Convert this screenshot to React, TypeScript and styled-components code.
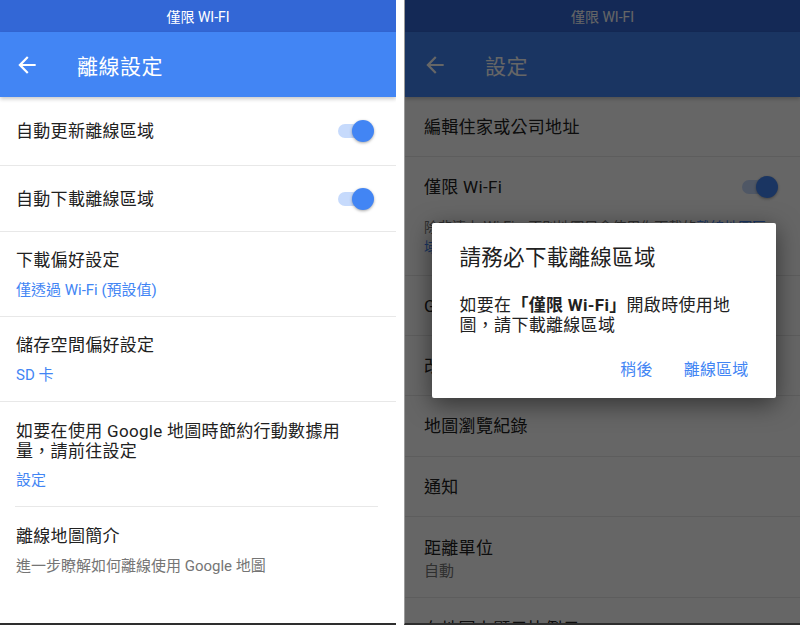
import styled, { createGlobalStyle } from "styled-components"

const GlobalStyle = createGlobalStyle`
  html, body {
    margin: 0;
    padding: 0;
    background: #ffffff;
  }
  body {
    font-family: Roboto, "Noto Sans CJK TC", sans-serif;
    color: #212121;
  }
`

const BackIcon = () => (
    <svg width="26" height="26" viewBox="0 0 24 24">
        <path fill="currentColor" d="M20 11H7.83l5.59-5.59L12 4l-8 8 8 8 1.41-1.41L7.83 13H20v-2z" />
    </svg>
)

const Toggle = () => (
    <Switch>
        <Track />
        <Thumb />
    </Switch>
)

const App = () => {
    return (
        <Page>
            <GlobalStyle />
            <Screen $edge={16}>
                <StatusBar>僅限 WI-FI</StatusBar>
                <Toolbar>
                    <BackButton><BackIcon /></BackButton>
                    <Title>離線設定</Title>
                </Toolbar>
                <SwitchRow $h={69} $line>
                    <Primary>自動更新離線區域</Primary>
                    <Toggle />
                </SwitchRow>
                <SwitchRow $h={66} $line>
                    <Primary>自動下載離線區域</Primary>
                    <Toggle />
                </SwitchRow>
                <TextRow $top={17} $gap={9} $line>
                    <Primary>下載偏好設定</Primary>
                    <Secondary $link>僅透過 Wi-Fi (預設值)</Secondary>
                </TextRow>
                <TextRow $top={17} $gap={9} $line>
                    <Primary>儲存空間偏好設定</Primary>
                    <Secondary $link>SD 卡</Secondary>
                </TextRow>
                <TextRow $top={19} $gap={9}>
                    <Primary $wrap>如要在使用 Google 地圖時節約行動數據用量，請前往設定</Primary>
                    <Secondary $link>設定</Secondary>
                </TextRow>
                <InsetDivider />
                <TextRow $top={18} $gap={9}>
                    <Primary>離線地圖簡介</Primary>
                    <Secondary>進一步瞭解如何離線使用 Google 地圖</Secondary>
                </TextRow>
            </Screen>

            <Screen $edge={19} $framed>
                <StatusBar>僅限 WI-FI</StatusBar>
                <Toolbar>
                    <BackButton><BackIcon /></BackButton>
                    <Title>設定</Title>
                </Toolbar>
                <SwitchRow $h={60} $line>
                    <Primary>編輯住家或公司地址</Primary>
                </SwitchRow>
                <SwitchRow $h={60}>
                    <Primary>僅限 Wi-Fi</Primary>
                    <Toggle />
                </SwitchRow>
                <Description>
                    除非連上 Wi-Fi，否則地圖只會使用你下載的<LinkText>離線地圖區域</LinkText>，範圍外的地圖將無法載入
                </Description>
                <SwitchRow $h={60} $line>
                    <Primary>Google 位置設定</Primary>
                </SwitchRow>
                <SwitchRow $h={60} $line>
                    <Primary>改善 Google 地圖</Primary>
                </SwitchRow>
                <SwitchRow $h={61} $line>
                    <Primary>地圖瀏覽紀錄</Primary>
                </SwitchRow>
                <SwitchRow $h={60} $line>
                    <Primary>通知</Primary>
                </SwitchRow>
                <TextRow $top={20} $gap={2} $line>
                    <Primary>距離單位</Primary>
                    <Secondary>自動</Secondary>
                </TextRow>
                <TextRow $top={20} $gap={2}>
                    <Primary>在地圖上顯示比例尺</Primary>
                </TextRow>

                <Scrim>
                    <Dialog>
                        <DialogTitle>請務必下載離線區域</DialogTitle>
                        <DialogBody>
                            如要在<b>「僅限 Wi-Fi」</b>開啟時使用地圖，請下載離線區域
                        </DialogBody>
                        <Actions>
                            <ActionButton>稍後</ActionButton>
                            <ActionButton>離線區域</ActionButton>
                        </Actions>
                    </Dialog>
                </Scrim>
            </Screen>
        </Page>
    )
}
export default App

const Page = styled.div`
    display: flex;
    gap: 8px;
    width: 800px;
    height: 625px;
    background: #ffffff;
`
const Screen = styled.div<{ $edge: number; $framed?: boolean }>`
    --edge: ${(p) => p.$edge}px;
    position: relative;
    width: 396px;
    height: 625px;
    box-sizing: border-box;
    overflow: hidden;
    background: #ffffff;
    border-bottom: 2px solid #2e2e2e;
    border-left: ${(p) => (p.$framed ? "1px solid #9a9a9a" : "none")};
`
const StatusBar = styled.div`
    height: 32px;
    display: flex;
    align-items: center;
    justify-content: center;
    background: #3367d6;
    color: #ffffff;
    font-size: 14px;
`
const Toolbar = styled.div`
    position: relative;
    z-index: 1;
    height: 65px;
    display: flex;
    align-items: center;
    background: #4285f4;
    color: #ffffff;
    box-shadow: 0 2px 4px rgba(0, 0, 0, 0.22);
`
const BackButton = styled.div`
    display: flex;
    width: 26px;
    height: 26px;
    margin-left: calc(var(--edge) - 2px);
`
const Title = styled.h1`
    margin: 0 0 0 37px;
    font-size: 21px;
    font-weight: 400;
    letter-spacing: 0.5px;
`
const SwitchRow = styled.div<{ $h: number; $line?: boolean }>`
    height: ${(p) => p.$h}px;
    box-sizing: border-box;
    display: flex;
    align-items: center;
    justify-content: space-between;
    padding: 0 22px 0 var(--edge);
    border-bottom: ${(p) => (p.$line ? "1px solid #e8e8e8" : "none")};
`
const TextRow = styled.div<{ $top: number; $gap: number; $line?: boolean }>`
    display: flex;
    flex-direction: column;
    gap: ${(p) => p.$gap}px;
    padding: ${(p) => p.$top}px 18px 16px var(--edge);
    border-bottom: ${(p) => (p.$line ? "1px solid #e8e8e8" : "none")};
`
const Primary = styled.div<{ $wrap?: boolean }>`
    font-size: 17px;
    line-height: ${(p) => (p.$wrap ? "20px" : "22px")};
    letter-spacing: 0.3px;
    max-width: ${(p) => (p.$wrap ? "348px" : "none")};
`
const Secondary = styled.div<{ $link?: boolean }>`
    font-size: 15px;
    line-height: 20px;
    color: ${(p) => (p.$link ? "#4285f4" : "#757575")};
`
const InsetDivider = styled.div`
    height: 1px;
    margin: 0 18px 0 15px;
    background: #e8e8e8;
`
const Description = styled.div`
    padding: 0 18px 18px var(--edge);
    font-size: 14px;
    line-height: 20px;
    color: #757575;
    border-bottom: 1px solid #e8e8e8;
`
const LinkText = styled.span`
    color: #4285f4;
`
const Switch = styled.div`
    position: relative;
    width: 36px;
    height: 22px;
    display: flex;
    align-items: center;
`
const Track = styled.div`
    width: 34px;
    height: 14px;
    border-radius: 7px;
    background: #c6dafc;
`
const Thumb = styled.div`
    position: absolute;
    right: 0;
    top: 0;
    width: 22px;
    height: 22px;
    border-radius: 50%;
    background: #4285f4;
    box-shadow: 0 1px 3px rgba(0, 0, 0, 0.35);
`
const Scrim = styled.div`
    position: absolute;
    inset: 0;
    z-index: 2;
    display: flex;
    align-items: center;
    justify-content: center;
    padding: 0 2px 3px 4px;
    background: rgba(0, 0, 0, 0.6);
`
const Dialog = styled.div`
    width: 344px;
    box-sizing: border-box;
    padding: 21px 0 12px;
    background: #ffffff;
    border-radius: 2px;
    box-shadow: 0 6px 24px rgba(0, 0, 0, 0.5);
`
const DialogTitle = styled.div`
    padding: 0 24px 0 28px;
    font-size: 21.5px;
    line-height: 28px;
    letter-spacing: 0.3px;
`
const DialogBody = styled.div`
    margin-top: 23px;
    padding: 0 28px;
    font-size: 17px;
    line-height: 20px;
    letter-spacing: 0.3px;
    b {
        font-weight: 700;
    }
`
const Actions = styled.div`
    display: flex;
    justify-content: flex-end;
    gap: 15px;
    margin-top: 15px;
    padding-right: 19px;
`
const ActionButton = styled.div`
    height: 36px;
    display: flex;
    align-items: center;
    padding: 0 8px;
    font-size: 16px;
    color: #4285f4;
    letter-spacing: 0.2px;
`
